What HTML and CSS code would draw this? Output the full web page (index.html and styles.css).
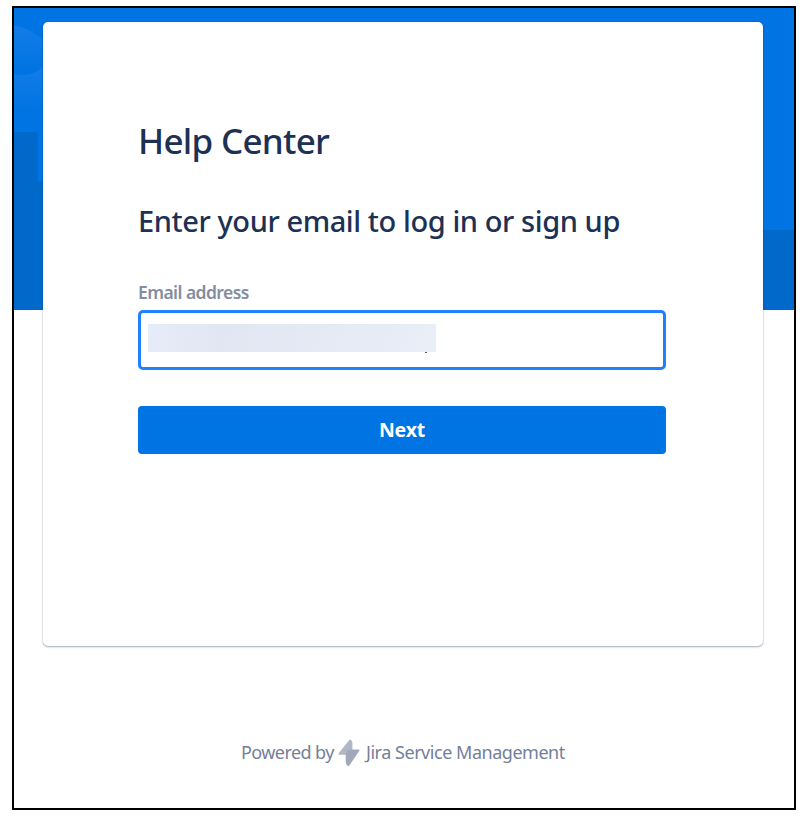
FILE: index.html
```html
<!DOCTYPE html>
<html lang="en">
<head>
<meta charset="utf-8">
<title>Help Center</title>
<link rel="stylesheet" href="styles.css">
</head>
<body>
<div class="frame">
  <svg class="backdrop" width="780" height="302" viewBox="0 0 780 302" aria-hidden="true">
    <defs>
      <linearGradient id="arc" x1="0" y1="0" x2="0" y2="1"><stop offset="0" stop-color="#137de6"/><stop offset="1" stop-color="#0074e2"/></linearGradient>
    </defs>
    <path fill="#0074e2" d="M0 0H780V302H0z"/>
    <path fill="url(#arc)" d="M0 17Q18 21 30 33V62H0z"/>
    <path fill="url(#arc)" d="M0 66Q18 70 30 58V102H0z"/>
    <path fill="#0069ca" d="M0 124H22Q24 124 24 126V173H40V302H0zM740 222H780V302H740z"/>
  </svg>
  <main class="card">
    <h1 class="title">Help Center</h1>
    <h2 class="subtitle">Enter your email to log in or sign up</h2>
    <label class="label" for="email">Email address</label>
    <div class="field" id="email"><div class="redacted"></div></div>
    <button class="next" type="button">Next</button>
  </main>
  <footer class="footer">
    <span class="powered">Powered by</span>
    <svg class="bolt" width="24" height="30" viewBox="0 0 24 30" aria-hidden="true">
      <path fill="#b0b7c6" d="M12.3 2Q13.3 1 14.3 2.2Q15.4 3.4 15.4 5V11.5L13 16.8H2.4Q.6 16.8 1.6 15.3z"/>
      <path fill="#a0a8ba" d="M8.7 16.8Q9.3 12 14 11.5H21.5Q23.2 11.5 22.2 13L12.3 27.5Q11.3 28.8 10.3 27.5Q8.7 26 8.7 23.5z"/>
    </svg>
    <span class="product">Jira Service Management</span>
  </footer>
</div>
</body>
</html>
```

FILE: styles.css
```css
* { box-sizing: border-box; }
body { margin: 0; background: #fff; font-family: "Noto Sans", "Open Sans", sans-serif; }
.frame {
  position: relative;
  width: 784px;
  height: 804px;
  margin: 6px 0 0 12px;
  border: 2px solid #000;
  padding: 14px 0 0 29px;
  overflow: hidden;
}
.backdrop { position: absolute; left: 0; top: 0; }
.card {
  position: relative;
  width: 720px;
  height: 624px;
  padding: 95px 97px 0 96px;
  background: #fff;
  border-radius: 5px;
  box-shadow: 0 1px 2px rgba(9, 30, 66, .36), 0 0 1px rgba(9, 30, 66, .25);
}
.title, .subtitle { margin: 0 0 0 -1px; color: #1c3154; font-weight: 500; white-space: nowrap; }
.title { font-size: 35px; line-height: 48px; letter-spacing: -.72px; }
.subtitle { margin-top: 36px; font-size: 29px; line-height: 40px; letter-spacing: -.41px; }
.label {
  display: block;
  margin: 39px 0 0 -1px;
  font-size: 17.5px;
  line-height: 24px;
  font-weight: 600;
  color: #848da0;
  letter-spacing: -.56px;
}
.field {
  height: 60px;
  margin: 6px 0 0 -1px;
  padding: 11px 7px;
  border: 3px solid #2080ff;
  border-radius: 5px;
}
.redacted {
  position: relative;
  width: 288px;
  height: 28px;
  background: linear-gradient(100deg, #e6edf8, #e0e7f2 25%, #e4ebf5 65%, #e9eef7);
}
.redacted::after {
  content: "";
  position: absolute;
  left: 277px;
  top: 28px;
  width: 2px;
  height: 1px;
  background: #4a5875;
}
.next {
  display: block;
  width: 528px;
  height: 48px;
  margin: 36px 0 0 -1px;
  padding: 0;
  border: 0;
  border-radius: 4px;
  background: #0074e2;
  color: #fff;
  font: 700 19.5px/48px "Noto Sans", sans-serif;
  letter-spacing: -.2px;
}
.footer {
  display: flex;
  align-items: center;
  height: 30px;
  margin: 92px 0 0 198px;
  font-size: 18px;
  line-height: 28px;
  color: #74809a;
  white-space: nowrap;
}
.powered { width: 96px; height: 30px; letter-spacing: -.58px; }
.bolt { flex: none; }
.product { height: 30px; margin-left: 5px; letter-spacing: -.47px; }
```
